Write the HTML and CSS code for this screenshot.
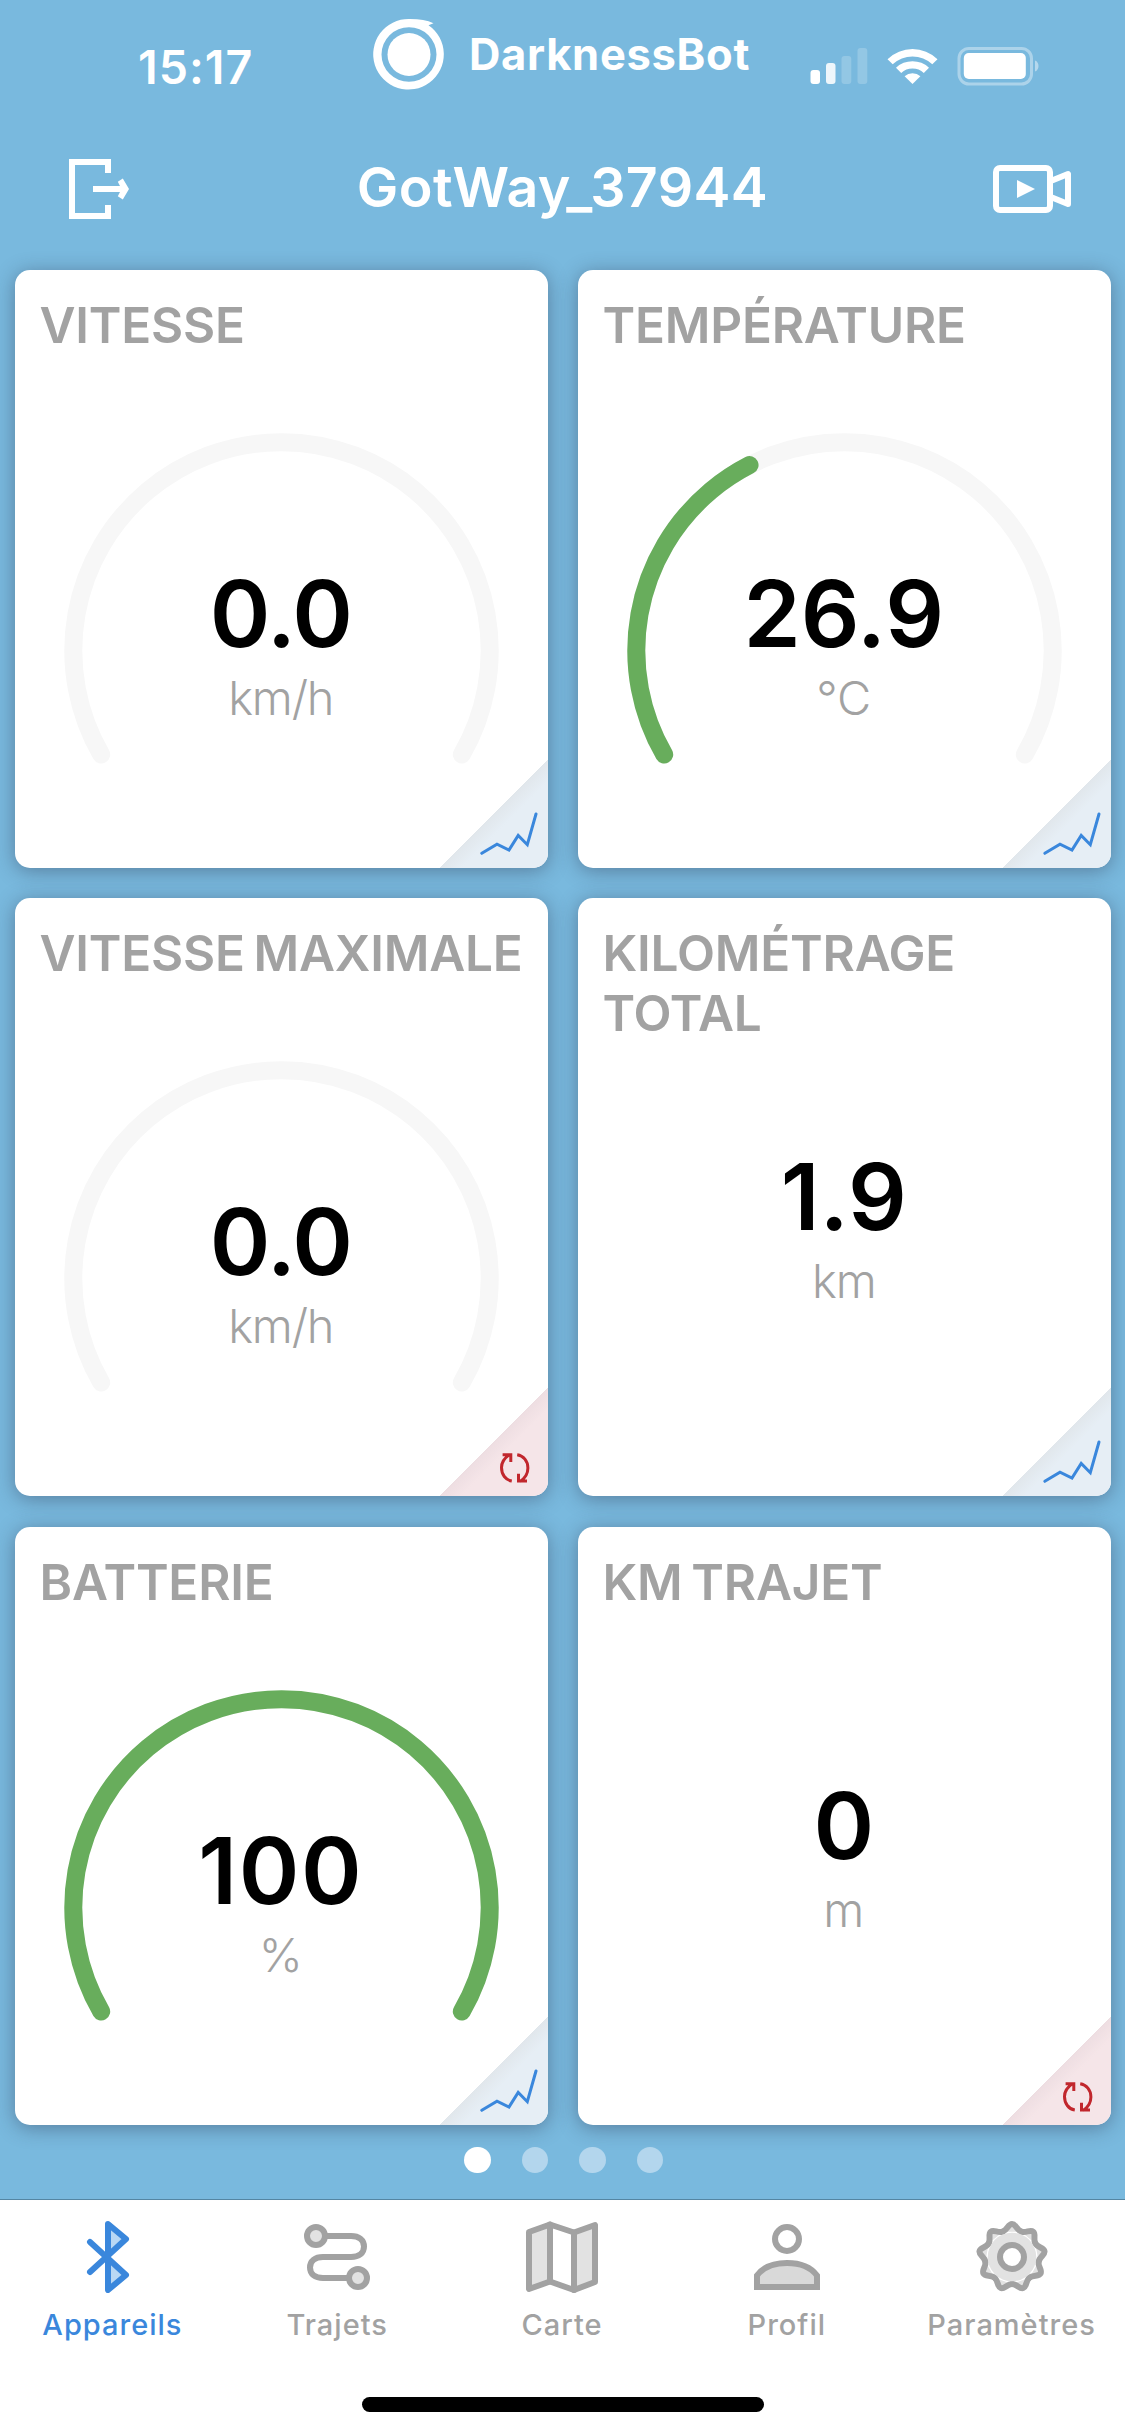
FILE: index.html
```html
<!DOCTYPE html>
<html lang="fr">
<head>
<meta charset="utf-8">
<title>DarknessBot</title>
<link rel="stylesheet" href="styles.css">
</head>
<body>
<svg class="defs" width="0" height="0" aria-hidden="true">
  <defs>
    <symbol id="corner-chart" viewBox="0 0 108 108">
      <path d="M41.8 93.3 57 84.2 69 90 78.2 75.5 87.3 84.7 96 54" fill="none" stroke="#3a87dc" stroke-width="3" stroke-linecap="round"/>
    </symbol>
    <symbol id="corner-reset" viewBox="0 0 108 108">
      <g fill="none" stroke="#c1272d" stroke-width="3">
        <path d="M71.8 93C65.5 92 61.5 86.5 61.5 79.5C61.5 73.5 64.5 70 69.5 66.5M62.6 66.8H70.8V74"/>
        <path d="M77.200 66.800C83.500 67.800 87.900 73 87.900 80C87.900 86 85.500 90 80 93.500M87 93H78.500V85.700"/>
      </g>
    </symbol>
    <path id="gear-lobe" d="M-9.230-25.370C-4.500-27.100-3.900-33 0-33S4.500-27.100 9.230-25.370"/>
  </defs>
</svg>

<header class="status">
  <span class="clock">15:17</span>
  <div class="app">
    <svg class="app-logo" viewBox="0 0 72 72">
      <circle cx="36" cy="36.500" r="21.500" fill="#fff"/>
      <path fill="#fff" fill-rule="evenodd" d="M60.500 5.200C54 2 46 .9 36 1A35.300 35.300 0 1 0 55.500 7.200L60.500 5.200ZM36 9.200A27.500 27.300 0 1 1 36 63.800A27.500 27.300 0 1 1 36 9.200Z"/>
    </svg>
    <span class="app-name">DarknessBot</span>
  </div>
  <svg class="indicators" viewBox="0 0 230 40">
    <g fill="#fff">
      <rect x=".5" y="24" width="9.500" height="14" rx="3"/>
      <rect x="16" y="17" width="9.500" height="21" rx="3" opacity=".87"/>
      <rect x="31.500" y="10" width="9.800" height="28" rx="3" opacity=".2"/>
      <rect x="47.500" y="2" width="9.800" height="36" rx="3" opacity=".2"/>
      <path d="M77.500 13.200A36 36 0 0 1 127.500 13.200L122.300 18.200A29 29 0 0 0 82.700 18.200Z"/>
      <path d="M86 21.700A24 24 0 0 1 119 21.700L113.800 27A16.500 16.500 0 0 0 91.200 27Z"/>
      <path d="M94.600 30.200A12 12 0 0 1 110.400 30.200L102.500 38Z"/>
      <rect x="153.800" y="7" width="62" height="26" rx="5"/>
      <path d="M225 14.500C229.700 16 229.700 24 225 25.500Z" opacity=".45"/>
    </g>
    <rect x="149" y="2.500" width="72.500" height="35.500" rx="10" fill="none" stroke="#fff" stroke-width="3" opacity=".38"/>
  </svg>
</header>

<nav class="titlebar">
  <svg class="exit" viewBox="0 0 60 60">
    <path fill="#fff" d="M0 0H42V14H36V6H6V54H36V46H42V60H0ZM24 27H51L48.800 22.700 53.800 19.500 60 30 53.800 40.500 48.800 37.300 51 33H24Z"/>
  </svg>
  <h1>GotWay_37944</h1>
  <svg class="camera" viewBox="0 0 78 48">
    <rect x="3" y="3" width="54" height="42" rx="4" fill="none" stroke="#fff" stroke-width="6"/>
    <path d="M24 15 42 24 24 33Z" fill="#fff"/>
    <path d="M59 15.500 75 9V39L59 32.500" fill="none" stroke="#fff" stroke-width="6" stroke-linejoin="round"/>
  </svg>
</nav>

<main class="board">
  <section class="card">
    <h2>VITESSE</h2>
    <svg class="gauge" viewBox="0 0 435 330"><path class="track" d="M37.200 321.500A208.200 208.200 0 1 1 397.800 321.500"/></svg>
    <div class="readout"><span class="value tight">0.0</span><span class="unit tight">km/h</span></div>
    <svg class="corner blue"><use href="#corner-chart"/></svg>
  </section>
  <section class="card">
    <h2>TEMPÉRATURE</h2>
    <svg class="gauge" viewBox="0 0 435 330"><path class="track" d="M37.200 321.500A208.200 208.200 0 1 1 397.800 321.500"/><path class="level" pathLength="100" stroke-dasharray="38.700 200" d="M37.200 321.500A208.200 208.200 0 1 1 397.800 321.500"/></svg>
    <div class="readout"><span class="value">26.9</span><span class="unit">°C</span></div>
    <svg class="corner blue"><use href="#corner-chart"/></svg>
  </section>
  <section class="card">
    <h2>VITESSE MAXIMALE</h2>
    <svg class="gauge" viewBox="0 0 435 330"><path class="track" d="M37.200 321.500A208.200 208.200 0 1 1 397.800 321.500"/></svg>
    <div class="readout"><span class="value tight">0.0</span><span class="unit tight">km/h</span></div>
    <svg class="corner red"><use href="#corner-reset"/></svg>
  </section>
  <section class="card">
    <h2>KILOMÉTRAGE<br>TOTAL</h2>
    <div class="readout plain"><span class="value">1.9</span><span class="unit tight">km</span></div>
    <svg class="corner blue"><use href="#corner-chart"/></svg>
  </section>
  <section class="card">
    <h2>BATTERIE</h2>
    <svg class="gauge" viewBox="0 0 435 330"><path class="level" d="M37.200 321.500A208.200 208.200 0 1 1 397.800 321.500"/></svg>
    <div class="readout"><span class="value loose">100</span><span class="unit">%</span></div>
    <svg class="corner blue"><use href="#corner-chart"/></svg>
  </section>
  <section class="card">
    <h2>KM TRAJET</h2>
    <div class="readout plain"><span class="value">0</span><span class="unit">m</span></div>
    <svg class="corner red"><use href="#corner-reset"/></svg>
  </section>
</main>

<div class="pager"><i class="on"></i><i></i><i></i><i></i></div>

<footer class="tabs">
  <a class="tab active">
    <svg viewBox="0 0 72 72"><path d="M32 36V3L50 18ZM32 36V69L50 54Z" fill="#b9d8f4"/><path d="M14 21 50 54 32 69V3L50 18 14 51" fill="none" stroke="currentColor" stroke-width="6" stroke-linecap="round" stroke-linejoin="round"/></svg>
    <span>Appareils</span>
  </a>
  <a class="tab">
    <svg viewBox="0 0 72 72" fill="none" stroke="currentColor" stroke-width="6"><path d="M24 15H50C58 15 63 19 63 25.500S58 36 50 36H22C14 36 9 40 9 46.500S14 57 22 57H48"/><circle cx="15" cy="15" r="9" fill="#e2e2e2"/><circle cx="57" cy="57" r="9" fill="#e2e2e2"/></svg>
    <span>Trajets</span>
  </a>
  <a class="tab">
    <svg viewBox="0 0 72 72" stroke="currentColor" stroke-width="6" stroke-linejoin="round" fill="#e2e2e2"><path d="M3 11 24 3.500V60.500L3 68Z"/><path d="M48 11.500 69 4V61L48 69Z"/><path d="M24 3.500 48 11.500V69L24 60.500Z" fill="#fff"/></svg>
    <span>Carte</span>
  </a>
  <a class="tab">
    <svg viewBox="0 0 72 72" fill="none" stroke="currentColor" stroke-width="6"><circle cx="36" cy="18" r="12"/><path d="M6 66V54.500C12 46.500 23 42 36 42S60 46.500 66 54.500V66Z" fill="#d9d9d9"/></svg>
    <span>Profil</span>
  </a>
  <a class="tab">
    <svg viewBox="-36 -36 72 72">
      <g fill="#e2e2e2" stroke="currentColor" stroke-width="6" stroke-linecap="round">
        <use href="#gear-lobe"/><use href="#gear-lobe" transform="rotate(40)"/><use href="#gear-lobe" transform="rotate(80)"/><use href="#gear-lobe" transform="rotate(120)"/><use href="#gear-lobe" transform="rotate(160)"/><use href="#gear-lobe" transform="rotate(200)"/><use href="#gear-lobe" transform="rotate(240)"/><use href="#gear-lobe" transform="rotate(280)"/><use href="#gear-lobe" transform="rotate(320)"/>
      </g>
      <circle r="24.300" fill="#e2e2e2"/>
      <circle r="12" fill="#fff" stroke="currentColor" stroke-width="6"/>
    </svg>
    <span>Paramètres</span>
  </a>
  <div class="home"></div>
</footer>
</body>
</html>
```
FILE: styles.css
```css
* { box-sizing: border-box; margin: 0; padding: 0; }

body {
  width: 1125px;
  height: 2436px;
  display: flex;
  flex-direction: column;
  overflow: hidden;
  background: #79b9de;
  font-family: Inter, "Liberation Sans", sans-serif;
}

svg { display: block; flex: none; }
.defs { position: absolute; }

.status {
  height: 130px;
  display: flex;
  align-items: flex-start;
  color: #fff;
}

.clock {
  width: 373px;
  padding: 39px 0 0 138px;
  font-size: 46.500px;
  line-height: 56px;
  font-weight: 600;
  letter-spacing: 1px;
}

.app {
  width: 437px;
  padding-top: 18px;
  display: flex;
  gap: 24px;
}

.app-logo { width: 72px; height: 72px; }

.app-name {
  padding-top: 8px;
  font-size: 43.500px;
  line-height: 56px;
  font-weight: 700;
  letter-spacing: .7px;
}

.indicators { width: 230px; height: 40px; margin-top: 46px; }

.titlebar {
  height: 140px;
  padding: 0 54px 0 69px;
  display: flex;
  align-items: flex-start;
  justify-content: space-between;
  color: #fff;
}

.exit { width: 60px; height: 60px; margin-top: 29px; }
.camera { width: 78px; height: 48px; margin-top: 35px; }

.titlebar h1 {
  padding: 22px 0 0 3px;
  font-size: 55.500px;
  line-height: 70px;
  font-weight: 600;
  letter-spacing: .35px;
}

.board {
  height: 1870px;
  padding: 0 14px 0 15px;
  display: grid;
  grid-template-columns: 533px 533px;
  grid-template-rows: 598px 599px 598px;
  gap: 30px;
  align-content: start;
}

.card {
  height: 598px;
  display: grid;
  overflow: hidden;
  border-radius: 15px;
  background: #fff;
  box-shadow: 0 3px 20px rgba(40, 45, 70, .42);
}

.card > * { grid-area: 1 / 1; }

.card h2 {
  padding: 25px 0 0 24.500px;
  color: #a2a2a2;
  font-size: 49.500px;
  line-height: 60px;
  font-weight: 600;
  letter-spacing: -.2px;
  word-spacing: -3.500px;
  white-space: nowrap;
}

.gauge {
  width: 435px;
  height: 330px;
  margin-top: 162.500px;
  justify-self: center;
  overflow: visible;
}

.gauge path { fill: none; stroke-width: 18px; stroke-linecap: round; }
.gauge .track { stroke: #f7f7f7; }
.gauge .level { stroke: #68ad5c; }

.readout {
  padding: 293.500px 1.500px 0 0;
  display: flex;
  flex-direction: column;
  align-items: center;
  gap: 4.500px;
}

.readout.plain { padding-top: 248.500px; }

.value { font-size: 92px; line-height: 100px; font-weight: 600; color: #000; }
.value.tight { letter-spacing: -1.200px; }
.value.loose { letter-spacing: 1.600px; }
.unit { font-size: 47px; line-height: 60px; font-weight: 300; color: #a2a2a2; }
.unit.tight { letter-spacing: -1.200px; }

.corner {
  width: 108px;
  height: 108px;
  align-self: end;
  justify-self: end;
}

.corner.blue { background: linear-gradient(135deg, transparent 50%, #e1e7ec 50%, #e6eef5 60%); }
.corner.red { background: linear-gradient(135deg, transparent 50%, #eedee2 50%, #f5e5e8 60%); }

.pager {
  height: 59px;
  padding: 6.500px 0 0 464px;
  display: flex;
  gap: 31px;
}

.pager i { width: 26.500px; height: 26.500px; border-radius: 50%; background: #b3d6ed; }
.pager .on { background: #fff; }

.tabs {
  height: 237px;
  padding: 21px 1px 0 0;
  display: grid;
  grid-template-columns: repeat(5, 1fr);
  grid-template-rows: 176px 15px;
  border-top: 1px solid #5586a3;
  background: #fff;
}

.tab {
  display: flex;
  flex-direction: column;
  align-items: center;
  color: #a2a2a2;
  font-size: 29px;
  line-height: 36px;
  font-weight: 500;
  letter-spacing: 1px;
}

.tab.active { color: #3a87dc; }
.tab svg { width: 72px; height: 72px; }
.tab span { margin-top: 13.500px; }

.home {
  grid-column: 1 / -1;
  justify-self: center;
  width: 402px;
  height: 15px;
  margin-left: 2px;
  border-radius: 8px;
  background: #000;
}
```
